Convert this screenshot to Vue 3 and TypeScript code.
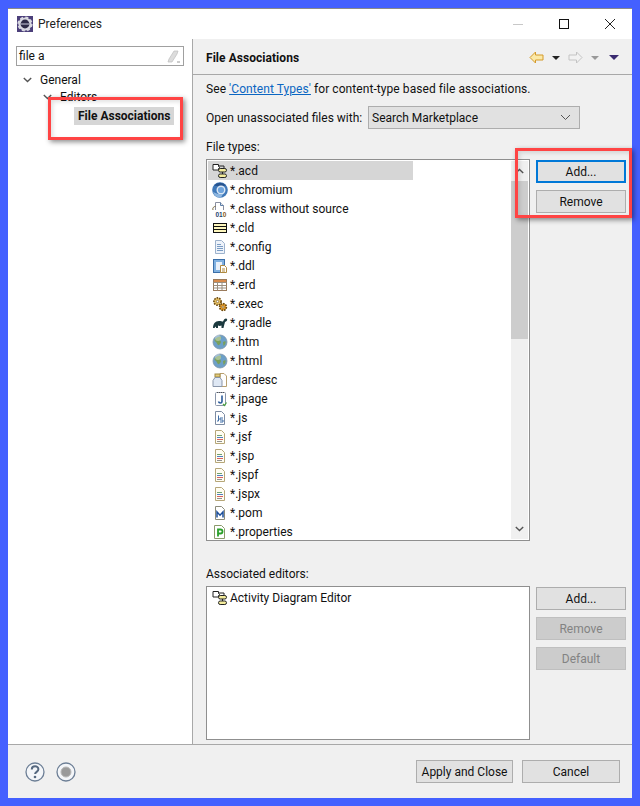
<script setup lang="ts">
const fileTypes: { icon: string; label: string }[] = [
  { icon: 'acd', label: '*.acd' },
  { icon: 'chromium', label: '*.chromium' },
  { icon: 'class', label: '*.class without source' },
  { icon: 'cld', label: '*.cld' },
  { icon: 'config', label: '*.config' },
  { icon: 'ddl', label: '*.ddl' },
  { icon: 'erd', label: '*.erd' },
  { icon: 'exec', label: '*.exec' },
  { icon: 'gradle', label: '*.gradle' },
  { icon: 'globe', label: '*.htm' },
  { icon: 'globe', label: '*.html' },
  { icon: 'jardesc', label: '*.jardesc' },
  { icon: 'jpage', label: '*.jpage' },
  { icon: 'js', label: '*.js' },
  { icon: 'jsp', label: '*.jsf' },
  { icon: 'jsp', label: '*.jsp' },
  { icon: 'jsp', label: '*.jspf' },
  { icon: 'jsp', label: '*.jspx' },
  { icon: 'pom', label: '*.pom' },
  { icon: 'props', label: '*.properties' },
]
</script>

<template>
  <div class="desktop">
    <div class="window">
      <header class="titlebar">
        <svg class="app-icon" width="16" height="16" viewBox="0 0 16 16">
          <rect x="0" y="0" width="16" height="16" fill="#4b3f7a" />
          <circle cx="8" cy="8" r="6.600" fill="#d8d8e0" stroke="#d8d8e0" stroke-width="2" stroke-dasharray="3 2.200" />
          <circle cx="8" cy="8" r="6" fill="#d8d8e0" />
          <circle cx="8" cy="8" r="4.400" fill="#2d2a45" />
          <path d="M3.800 8h8.400" stroke="#cfcfe0" stroke-width="1" />
        </svg>
        <span class="title">Preferences</span>
        <div class="win-controls">
          <svg width="12" height="12" viewBox="0 0 12 12"><path d="M1 6.500h10" stroke="#c8c8c8" /></svg>
          <svg width="12" height="12" viewBox="0 0 12 12"><rect x="1.500" y="1.500" width="9" height="9" fill="none" stroke="#111" /></svg>
          <svg width="12" height="12" viewBox="0 0 12 12"><path d="M1 1l10 10M11 1L1 11" stroke="#222" /></svg>
        </div>
      </header>

      <div class="body">
        <aside class="sidebar">
          <div class="filter">
            <span>file a</span>
            <svg width="14" height="13" viewBox="0 0 14 13">
              <path d="M1 12l1-3 5-8h4l-1 3-5 8z" fill="#dcdcdc" stroke="#bdbdbd" stroke-width=".7" />
              <path d="M10 12h3" stroke="#999" />
            </svg>
          </div>
          <div class="tree">
            <div class="node lvl0">
              <svg class="twist" width="9" height="6" viewBox="0 0 9 6"><path d="M.8 1l3.700 3.600L8.200 1" fill="none" stroke="#555" stroke-width="1.400" /></svg>
              <span>General</span>
            </div>
            <div class="node lvl1">
              <svg class="twist" width="9" height="6" viewBox="0 0 9 6"><path d="M.8 1l3.700 3.600L8.200 1" fill="none" stroke="#555" stroke-width="1.400" /></svg>
              <span>Editors</span>
            </div>
            <div class="node lvl2"><span class="selected-node">File Associations</span></div>
          </div>
          <div class="highlight hl-tree"></div>
        </aside>

        <main class="page">
          <div class="page-head">
            <h1>File Associations</h1>
            <div class="nav-tools">
              <svg width="15" height="13" viewBox="0 0 15 13"><path d="M6.500 1L1 6.500 6.500 12V9h7.500V4H6.500z" fill="#fbe9a8" stroke="#d49a2a" /></svg>
              <i class="caret dark"></i>
              <svg width="15" height="13" viewBox="0 0 15 13"><path d="M8.500 1L14 6.500 8.500 12V9H1V4h7.500z" fill="#f2f2f2" stroke="#c4c4c4" /></svg>
              <i class="caret grey"></i>
              <i class="caret purple"></i>
            </div>
          </div>

          <div class="page-content">
            <p class="line">See <a>'Content Types'</a> for content-type based file associations.</p>
            <div class="open-row">
              <label>Open unassociated files with:</label>
              <div class="combo">
                <span>Search Marketplace</span>
                <svg width="11" height="7" viewBox="0 0 11 7"><path d="M1 1l4.500 4.500L10 1" fill="none" stroke="#555" /></svg>
              </div>
            </div>
            <div class="caption types-caption">File types:</div>

            <div class="types-area">
              <div class="listbox types">
                <ul class="rows">
                  <li v-for="(f, i) in fileTypes" :key="f.label" class="row" :class="{ current: i === 0 }">
                    <svg class="ficon" width="16" height="16" viewBox="0 0 16 16">
                      <template v-if="f.icon === 'acd'">
                        <path d="M1 1.500h5.500v2l1.200 1-1.200 1V7H1z" fill="#fff" stroke="#222" />
                        <path d="M7 3h5v2.500M7 8h5" fill="none" stroke="#222" />
                        <rect x="6.500" y="5.500" width="8" height="3.500" rx="1.700" fill="#f4ec9c" stroke="#222" />
                        <rect x="6.500" y="11" width="8" height="3.500" rx="1.700" fill="#f4ec9c" stroke="#222" />
                        <path d="M10.500 9v2" stroke="#222" />
                      </template>
                      <template v-else-if="f.icon === 'chromium'">
                        <circle cx="8" cy="8" r="7.800" fill="#3f78b8" />
                        <path d="M2 3.500a7.800 7.800 0 0 1 12 0L8 4.500z" fill="#27548f" />
                        <circle cx="9" cy="8" r="3.800" fill="#6fa4dc" stroke="#dce8f5" stroke-width="1.400" />
                        <path d="M1 10a7.800 7.800 0 0 0 8 5.500l2-3.500-5 0z" fill="#8db6e0" />
                      </template>
                      <template v-else-if="f.icon === 'class'">
                        <path d="M3.500 9V1.500h5l3 3V9" fill="#fff" stroke="#8a8fa0" />
                        <path d="M8.500 1.500v3h3" fill="#dce3ee" stroke="#5c7fa8" />
                        <path d="M1 9a2.500 2.500 0 0 1 2.500-3.500" fill="none" stroke="#7a6a40" />
                        <text x="3.500" y="15.500" class="bits">01<tspan class="bit-last">0</tspan></text>
                      </template>
                      <template v-else-if="f.icon === 'cld'">
                        <rect x="1.500" y="3.500" width="13" height="9" fill="#fdf6bd" stroke="#111" />
                        <path d="M1.500 6.500h13M1.500 9.500h13" stroke="#111" />
                      </template>
                      <template v-else-if="f.icon === 'config'">
                        <path d="M3.500 1.500h6l3 3v10h-9z" fill="#eef3fa" stroke="#9db2cc" />
                        <path d="M5 5.500h4M5 7.500h6M5 9.500h6M5 11.500h6" stroke="#7a9cc4" />
                      </template>
                      <template v-else-if="f.icon === 'ddl'">
                        <rect x="1.500" y="1.500" width="11" height="13" fill="#7fb0e0" stroke="#3a6ea8" />
                        <rect x="4" y="4" width="6" height="8" fill="#e8f0fa" />
                        <path d="M8.500 7.500h4l2 2v5h-6z" fill="#fff" stroke="#b08a40" />
                        <path d="M10 11h3M10 13h3" stroke="#b08a40" />
                      </template>
                      <template v-else-if="f.icon === 'erd'">
                        <rect x="1.500" y="2.500" width="13" height="11" fill="#fff" stroke="#9a7a5a" />
                        <rect x="2" y="3" width="12" height="2.500" fill="#d88a4a" />
                        <path d="M1.500 5.500h13M1.500 8.500h13M1.500 11h13M5.500 5.500v8M10 5.500v8" stroke="#9a8f80" />
                      </template>
                      <template v-else-if="f.icon === 'exec'">
                        <circle cx="5.500" cy="5.500" r="3.600" fill="#e8c060" stroke="#6a4a10" stroke-width="1.600" stroke-dasharray="1.600 1" />
                        <circle cx="5.500" cy="5.500" r="1.200" fill="#fff" stroke="#6a4a10" stroke-width=".6" />
                        <circle cx="11" cy="11" r="3.400" fill="#e8a030" stroke="#6a4a10" stroke-width="1.600" stroke-dasharray="1.600 1" />
                        <circle cx="11" cy="11" r="1.100" fill="#fff" stroke="#6a4a10" stroke-width=".6" />
                      </template>
                      <template v-else-if="f.icon === 'gradle'">
                        <path d="M1 13c0-4 2-7 6-7 2 0 3 .5 4 .5 1-2 1.500-3 3-3 1 0 1.500 1 1 2-.5 1-1.500 1-2 1.500-.5 2-1 3.500-1.500 6h-2v-2.500c-1 .5-2.500.5-3.500 0V13h-2v-1.500c-.5 0-1 .5-1.500 1.500z" fill="#1c3a3f" />
                      </template>
                      <template v-else-if="f.icon === 'globe'">
                        <circle cx="8" cy="8" r="7" fill="#6c9fc8" stroke="#7e95a8" stroke-width=".8" />
                        <path d="M3 5c2-2 5-3 6-2 1 1-1 2-1 3s1 1 1 2-2 4-3 3-1-2-2-3-2-1-1-3z" fill="#7aa05a" />
                        <path d="M11 8l2.500-1c.5 2-.5 4-2 5z" fill="#7aa05a" />
                        <circle cx="6" cy="4" r="3" fill="#fff" opacity=".35" />
                      </template>
                      <template v-else-if="f.icon === 'jardesc'">
                        <path d="M8 1.500h4l2.500 2.500v10.500H8z" fill="#fff" stroke="#b8a070" />
                        <rect x="3" y="2" width="5" height="3" fill="#e4cc7c" stroke="#a08840" />
                        <path d="M3 5.500h5l2 3v6H1v-6z" fill="#dfe8f4" stroke="#8a96aa" />
                      </template>
                      <template v-else-if="f.icon === 'jpage'">
                        <rect x="3.500" y="1.500" width="10" height="13" rx="1" fill="#fff" stroke="#8a96aa" />
                        <path d="M5 1.500h7" stroke="#555" stroke-dasharray="1 1" />
                        <path d="M10 4.500v6c0 2-3 2-3.500 0" fill="none" stroke="#2a5a9a" stroke-width="1.600" />
                        <path d="M11 13l1.500 1.500 2-3" fill="none" stroke="#4aa040" stroke-width="1.200" />
                      </template>
                      <template v-else-if="f.icon === 'js'">
                        <path d="M3.500 1.500h6l3 3v10h-9z" fill="#fff" stroke="#7d8ca3" />
                        <path d="M6.500 5.500v5.500H5M8 8h3M8 8v2h3v2H8" fill="none" stroke="#3f6fa8" />
                      </template>
                      <template v-else-if="f.icon === 'jsp'">
                        <path d="M3.500 1.500h6l3 3v10h-9z" fill="#fffdf2" stroke="#b6a678" />
                        <path d="M5 6.500h5" stroke="#70a070" />
                        <path d="M5 8.500h6" stroke="#5080c0" />
                        <path d="M5 10.500h6" stroke="#d86060" />
                        <path d="M5 12.500h5" stroke="#909090" />
                      </template>
                      <template v-else-if="f.icon === 'pom'">
                        <path d="M3.500 1.500h6l3 3v10h-9z" fill="#fff" stroke="#8b8b7a" />
                        <path d="M5 12.500V7l3 3.200L11 7v5.500" fill="none" stroke="#1d4f9a" stroke-width="1.500" />
                      </template>
                      <template v-else>
                        <path d="M2.500 1.500h7l3 3v10h-10z" fill="#fff" stroke="#8a9a6a" />
                        <path d="M6 12.500V5.500h2.500a2 2 0 0 1 0 4H6" fill="none" stroke="#2aa02a" stroke-width="1.800" />
                      </template>
                    </svg>
                    <span class="rowtext">{{ f.label }}</span>
                  </li>
                </ul>
                <div class="scrollbar">
                  <svg width="9" height="6" viewBox="0 0 9 6"><path d="M.8 5l3.700-3.600L8.200 5" fill="none" stroke="#555" stroke-width="1.400" /></svg>
                  <div class="track"><div class="thumb"></div></div>
                  <svg width="9" height="6" viewBox="0 0 9 6"><path d="M.8 1l3.700 3.600L8.200 1" fill="none" stroke="#555" stroke-width="1.400" /></svg>
                </div>
              </div>
              <div class="side-buttons">
                <button class="btn default">Add...</button>
                <button class="btn">Remove</button>
              </div>
              <div class="highlight hl-buttons"></div>
            </div>

            <div class="caption editors-caption">Associated editors:</div>
            <div class="editors-area">
              <div class="listbox editors">
                <div class="row">
                  <svg class="ficon" width="16" height="16" viewBox="0 0 16 16">
                    <path d="M1 1.500h5.500v2l1.200 1-1.200 1V7H1z" fill="#fff" stroke="#222" />
                    <path d="M7 3h5v2.500M7 8h5" fill="none" stroke="#222" />
                    <rect x="6.500" y="5.500" width="8" height="3.500" rx="1.700" fill="#f4ec9c" stroke="#222" />
                    <rect x="6.500" y="11" width="8" height="3.500" rx="1.700" fill="#f4ec9c" stroke="#222" />
                    <path d="M10.500 9v2" stroke="#222" />
                  </svg>
                  <span class="rowtext">Activity Diagram Editor</span>
                </div>
              </div>
              <div class="side-buttons">
                <button class="btn">Add...</button>
                <button class="btn disabled">Remove</button>
                <button class="btn disabled">Default</button>
              </div>
            </div>
          </div>
        </main>
      </div>

      <footer class="footer">
        <div class="foot-icons">
          <svg width="20" height="20" viewBox="0 0 20 20">
            <circle cx="10" cy="10" r="9" fill="#f4f6f9" stroke="#6d7f96" stroke-width="1.300" />
            <path d="M6.800 7.500c0-4.200 6.600-4.200 6.600-.2 0 2.500-3.300 2.500-3.300 4.700" fill="none" stroke="#56687f" stroke-width="2" />
            <circle cx="10" cy="15" r="1.300" fill="#56687f" />
          </svg>
          <svg width="20" height="20" viewBox="0 0 20 20">
            <circle cx="10" cy="10" r="9" fill="#f4f6f9" stroke="#6d7f96" stroke-width="1.300" />
            <circle cx="10" cy="10" r="5" fill="#9a9a9a" stroke="#b8b8b8" />
          </svg>
        </div>
        <div class="foot-buttons">
          <button class="btn foot">Apply and Close</button>
          <button class="btn foot">Cancel</button>
        </div>
      </footer>
    </div>
  </div>
</template>

<style>
html, body { margin: 0; padding: 0; background: #4460ff; }
</style>

<style scoped>
.desktop {
  width: 640px;
  height: 806px;
  box-sizing: border-box;
  padding: 8px;
  background: #4460ff;
  font-family: Roboto, "Noto Sans", sans-serif;
  font-size: 12px;
  color: #111;
  overflow: hidden;
}
.window {
  width: 100%;
  height: 100%;
  background: #f0f0f0;
  display: flex;
  flex-direction: column;
}
.titlebar {
  height: 31px;
  flex: none;
  background: #fff;
  display: flex;
  align-items: center;
  padding: 0 0 1px 9px;
  border-top: 1px solid #8a8a8a;
  box-sizing: border-box;
}
.app-icon { margin-right: 5px; }
.title { font-size: 12px; color: #222; }
.win-controls {
  margin-left: auto;
  display: flex;
  gap: 34px;
  padding-right: 16px;
  align-items: center;
}
.body { flex: 1; display: flex; min-height: 0; border-bottom: 1px solid #a8a8a8; }
.sidebar {
  background: #fff;
  border-right: 1px solid #a8a8a8;
  position: relative;
  padding: 7px 0 0 8px;
  width: 176px;
  flex: none;
}
.filter {
  height: 18px;
  border: 1px solid #a0a0a0;
  background: #fff;
  display: flex;
  align-items: center;
  justify-content: space-between;
  padding: 0 2px;
  width: 162px;
}
.tree { margin-top: 5px; }
.node { height: 18px; display: flex; align-items: center; position: relative; }
.lvl0 { padding-left: 7px; gap: 8px; }
.lvl1 { padding-left: 27px; gap: 8px; margin-top: -1px; }
.lvl2 { padding-left: 58px; margin-top: 1px; }
.selected-node {
  background: #d6d6d6;
  font-weight: 700;
  padding: 0 4px;
  height: 18px;
  line-height: 18px;
  white-space: nowrap;
}
.highlight {
  position: absolute;
  border: 3px solid #ff4444;
  box-shadow: 2px 2px 5px rgba(0, 0, 0, .45), inset 2px 2px 4px rgba(0, 0, 0, .12);
  box-sizing: border-box;
  pointer-events: none;
}
.hl-tree { left: 40px; top: 58px; width: 135px; height: 43px; }
.hl-buttons { left: 309px; top: -11px; width: 117px; height: 70px; }
.page { flex: 1; min-width: 0; display: flex; flex-direction: column; }
.page-head {
  height: 36px;
  flex: none;
  display: flex;
  align-items: center;
  justify-content: space-between;
  padding: 2px 13px 0 13px;
  border-bottom: 1px solid #a8a8a8;
  box-sizing: border-box;
}
h1 { margin: 0; font-size: 12px; font-weight: 700; color: #111; letter-spacing: .05px; }
.nav-tools { display: flex; align-items: center; gap: 8px; }
.caret { display: block; width: 0; height: 0; border-style: solid; border-color: transparent; border-width: 4px 4px 0; }
.caret.dark { border-top-color: #222; }
.caret.grey { border-top-color: #999; }
.caret.purple { border-top-color: #3a2a70; border-width: 5px 5px 0; margin-left: 2px; }
.page-content { padding: 0 6px 0 13px; }
.line { margin: 5px 0 0; height: 18px; line-height: 18px; letter-spacing: .07px; }
a { color: #0b66c2; text-decoration: underline; }
.open-row { display: flex; align-items: center; margin-top: 8px; height: 23px; }
.open-row label { width: 162px; flex: none; white-space: nowrap; }
.combo {
  width: 212px;
  height: 23px;
  border: 1px solid #adadad;
  background: #e1e1e1;
  display: flex;
  align-items: center;
  justify-content: space-between;
  padding: 0 8px 0 3px;
  box-sizing: border-box;
}
.caption { height: 18px; line-height: 18px; }
.types-caption { margin-top: 9px; }
.types-area { position: relative; display: flex; margin-top: 3px; gap: 6px; }
.listbox {
  border: 1px solid #8f8f8f;
  background: #fff;
  box-sizing: border-box;
  width: 324px;
  padding: 1px;
  flex: none;
}
.types { height: 382px; display: flex; overflow: hidden; }
.rows { list-style: none; margin: 0; padding: 0; flex: 1; min-width: 0; }
.row { height: 19px; display: flex; align-items: center; width: 205px; white-space: nowrap; }
.row.current { background: #d6d6d6; }
.ficon { flex: none; margin: 0 2px 0 4px; overflow: visible; }
.bits { font: 700 6.500px "Liberation Sans", sans-serif; fill: #1d3f6f; }
.bit-last { fill: #8a5a20; }
.scrollbar {
  width: 17px;
  flex: none;
  background: #f0f0f0;
  display: flex;
  flex-direction: column;
  align-items: center;
}
.scrollbar svg { flex: none; margin: 7px 0; }
.track { flex: 1; width: 100%; min-height: 0; }
.thumb { height: 158px; background: #cdcdcd; }
.side-buttons { display: flex; flex-direction: column; gap: 7px; padding-top: 1px; }
.btn {
  width: 90px;
  height: 23px;
  box-sizing: border-box;
  border: 1px solid #adadad;
  background: #e1e1e1;
  font: inherit;
  color: #111;
  padding: 0;
}
.btn.default { border: 2px solid #0078d7; }
.btn.disabled { background: #cccccc; color: #838383; border-color: #bfbfbf; }
.editors-caption { margin-top: 24px; }
.editors-area { display: flex; gap: 6px; margin-top: 3px; }
.editors { height: 154px; }
.editors .row { width: auto; }
.footer {
  height: 53px;
  flex: none;
  display: flex;
  align-items: center;
  justify-content: space-between;
  padding: 0 12px 0 17px;
  box-sizing: border-box;
}
.foot-icons { display: flex; gap: 11px; }
.foot-buttons { display: flex; gap: 9px; }
.btn.foot { width: 97px; }
.btn.foot + .btn.foot { width: 98px; }
</style>
